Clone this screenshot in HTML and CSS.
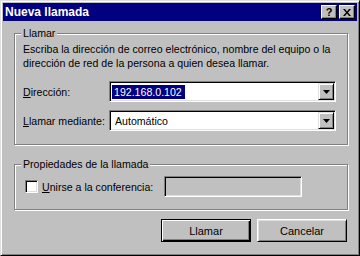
FILE: index.html
```html
<!DOCTYPE html>
<html>
<head>
<meta charset="utf-8">
<title>Nueva llamada</title>
<link rel="stylesheet" href="styles.css">
</head>
<body>
<div class="dialog">
  <div class="titlebar">
    <span class="title">Nueva llamada</span>
    <div class="caption-buttons">
      <span class="cap-btn help">?</span>
      <span class="cap-btn close">
        <svg width="8" height="7" viewBox="0 0 8 7"><path d="M0 0h2l2 2.5L6 0h2L5 3.5 8 7H6L4 4.5 2 7H0l3-3.5z" fill="#000"/></svg>
      </span>
    </div>
  </div>

  <div class="content">
    <fieldset class="group group-call">
      <legend>Llamar</legend>
      <p class="desc">Escriba la dirección de correo electrónico, nombre del equipo o la<br>dirección de red de la persona a quien desea llamar.</p>
      <div class="row">
        <label class="row-label"><u>D</u>irección:</label>
        <div class="combo">
          <span class="combo-text"><span class="sel">192.168.0.102</span></span>
          <span class="drop"><svg width="7" height="4" viewBox="0 0 7 4"><path d="M0 0h7L3.5 4z" fill="#000"/></svg></span>
        </div>
      </div>
      <div class="row row-second">
        <label class="row-label"><u>L</u>lamar mediante:</label>
        <div class="combo">
          <span class="combo-text plain">Automático</span>
          <span class="drop"><svg width="7" height="4" viewBox="0 0 7 4"><path d="M0 0h7L3.5 4z" fill="#000"/></svg></span>
        </div>
      </div>
    </fieldset>

    <fieldset class="group group-props">
      <legend>Propiedades de la llamada</legend>
      <div class="check-row">
        <span class="checkbox"></span>
        <label class="check-label"><u>U</u>nirse a la conferencia:</label>
        <span class="textbox disabled"></span>
      </div>
    </fieldset>

    <div class="buttons">
      <button class="btn default">Llamar</button>
      <button class="btn">Cancelar</button>
    </div>
  </div>
</div>
</body>
</html>
```

FILE: styles.css
```css
body {
  margin: 0;
  background: #c0c0c0;
  font-family: "Liberation Sans", Arial, sans-serif;
  font-size: 10.6px;
  color: #000;
}

.dialog {
  width: 360px;
  height: 256px;
  box-sizing: border-box;
  padding: 2px;
  background: #c0c0c0;
  border: 1px solid;
  border-color: #dfdfdf #000 #000 #dfdfdf;
  box-shadow: inset 1px 1px 0 #fff, inset -1px -1px 0 #808080;
}

/* title bar */
.titlebar {
  height: 18px;
  background: #000080;
  color: #fff;
  display: flex;
  align-items: center;
  justify-content: space-between;
  padding: 0 2px 0 2px;
}

.title {
  font-weight: bold;
  font-size: 12px;
}

.caption-buttons {
  display: flex;
  gap: 2px;
}

.cap-btn {
  width: 16px;
  height: 14px;
  box-sizing: border-box;
  background: #c0c0c0;
  border: 1px solid;
  border-color: #fff #000 #000 #fff;
  box-shadow: inset -1px -1px 0 #808080;
  display: flex;
  align-items: center;
  justify-content: center;
  color: #000;
  font-weight: bold;
  font-size: 11px;
  line-height: 12px;
}

/* body */
.content {
  padding: 6px 9px 0 11px;
}

.group {
  margin: 0;
  padding: 0 11px 0 8px;
  min-width: 0;
  border: 1px solid #808080;
  box-shadow: 1px 1px 0 #fff, inset 1px 1px 0 #fff;
}

.group legend {
  padding: 0 2px;
  margin-left: -2px;
  line-height: 13px;
  background: #c0c0c0;
}

.group-call {
  padding-bottom: 13px;
}

.desc {
  margin: 2px 0 0 0;
  line-height: 14px;
  white-space: nowrap;
}

.row {
  display: flex;
  align-items: center;
  margin-top: 11px;
}

.row-second {
  margin-top: 8px;
}

.row-label {
  width: 86px;
}

.combo {
  flex: 1;
  height: 21px;
  box-sizing: border-box;
  display: flex;
  align-items: center;
  background: #fff;
  border: 1px solid;
  border-color: #808080 #fff #fff #808080;
  box-shadow: inset 1px 1px 0 #000, inset -1px -1px 0 #dfdfdf;
  padding: 1px;
}

.combo-text {
  flex: 1;
  padding-left: 1px;
}

.combo-text.plain {
  padding-left: 4px;
}

.sel {
  display: inline-block;
  background: #000080;
  color: #fff;
  line-height: 14px;
  padding: 0 3px 0 2px;
}

.drop {
  width: 16px;
  height: 17px;
  box-sizing: border-box;
  background: #c0c0c0;
  border: 1px solid;
  border-color: #dfdfdf #000 #000 #dfdfdf;
  box-shadow: inset 1px 1px 0 #fff, inset -1px -1px 0 #808080;
  display: flex;
  align-items: center;
  justify-content: center;
}

.group-props {
  margin-top: 13px;
  padding-bottom: 12px;
}

.check-row {
  display: flex;
  align-items: center;
  margin-top: 5px;
}

.checkbox {
  width: 13px;
  height: 13px;
  box-sizing: border-box;
  margin-left: 2px;
  background: #fff;
  border: 1px solid;
  border-color: #808080 #fff #fff #808080;
  box-shadow: inset 1px 1px 0 #000, inset -1px -1px 0 #dfdfdf;
}

.check-label {
  margin-left: 4px;
  width: 122px;
}

.textbox {
  width: 138px;
  height: 21px;
  box-sizing: border-box;
  border: 1px solid;
  border-color: #808080 #fff #fff #808080;
  box-shadow: inset 1px 1px 0 #000, inset -1px -1px 0 #dfdfdf;
}

.textbox.disabled {
  background: #c0c0c0;
}

/* dialog buttons */
.buttons {
  display: flex;
  justify-content: flex-end;
  gap: 6px;
  margin-top: 9px;
  padding-right: 1px;
}

.btn {
  width: 90px;
  height: 23px;
  margin: 0;
  padding: 0;
  font-family: inherit;
  font-size: 11px;
  color: #000;
  background: #c0c0c0;
  border: 1px solid;
  border-color: #fff #000 #000 #fff;
  box-shadow: inset 1px 1px 0 #dfdfdf, inset -1px -1px 0 #808080;
}

.btn.default {
  border-color: #000;
  box-shadow: inset 1px 1px 0 #fff, inset -1px -1px 0 #000, inset -2px -2px 0 #808080;
}
```
